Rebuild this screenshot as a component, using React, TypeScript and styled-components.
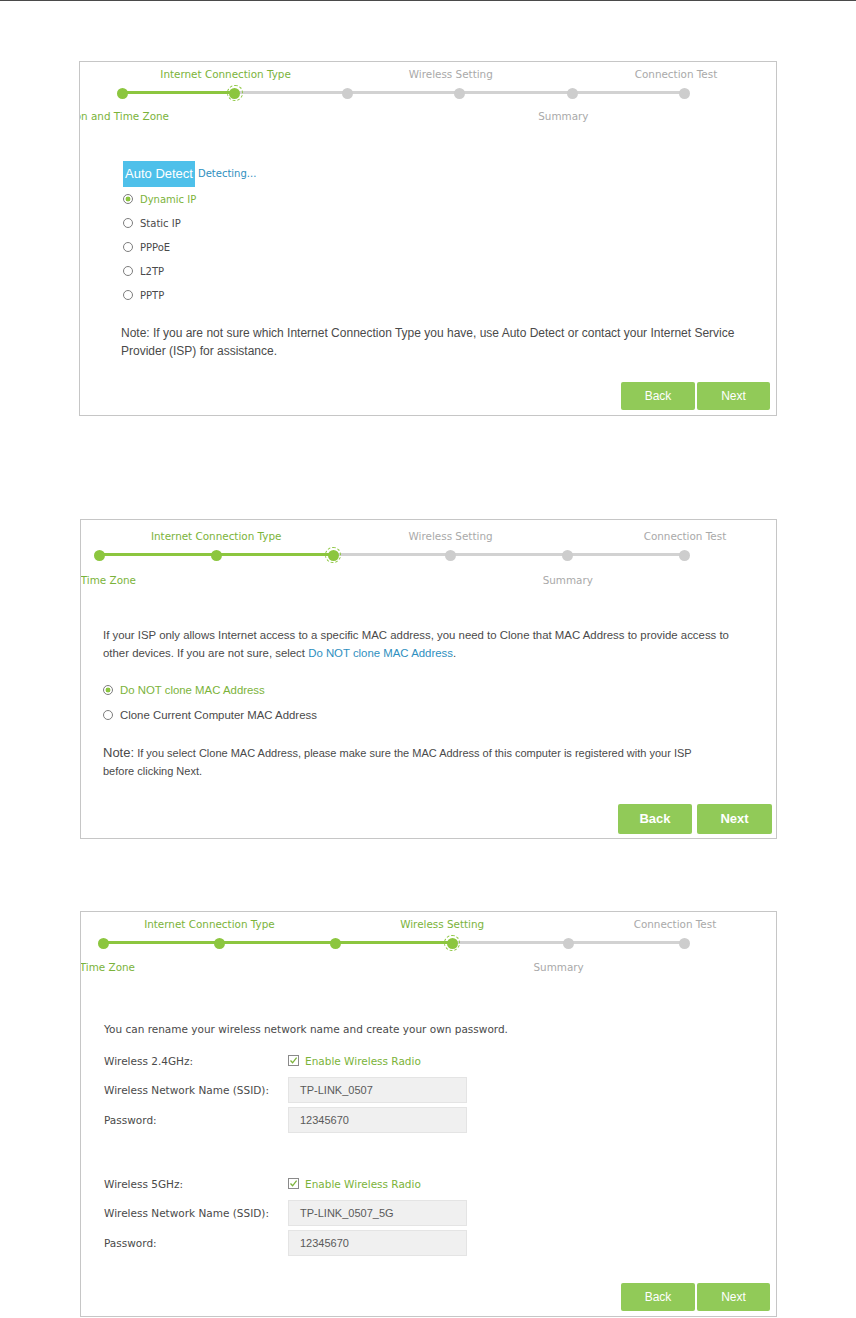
import * as React from 'react'
import styled, { createGlobalStyle } from 'styled-components'

const GREEN = '#8cc63f'
const GREEN_TEXT = '#7bb33a'
const GRAY_LINE = '#d2d2d2'
const GRAY_TEXT = '#a9a9a9'
const BODY_TEXT = '#4a4a4a'
const LINK = '#2e8fc0'

const GlobalStyle = createGlobalStyle`
    body {
        margin: 0;
        background: #fff;
    }
`

interface IStep {
    top?: string
    bottom?: string
}

const STEPS: IStep[] = [
    { bottom: 'Region and Time Zone' },
    { top: 'Internet Connection Type' },
    {},
    { top: 'Wireless Setting' },
    { bottom: 'Summary' },
    { top: 'Connection Test' },
]

interface IStepperProps {
    current: number
    padLeft: number
    padRight: number
    padTop: number
    shift: number
    firstOffset: number
    below: number
}

const Stepper = ({ current, padLeft, padRight, padTop, shift, firstOffset, below }: IStepperProps) => (
    <StepperBar padLeft={padLeft} padRight={padRight} padTop={padTop}>
        <Track pct={(current / (STEPS.length - 1)) * 100}>
            {STEPS.map((s, i) => (
                <Step key={i}>
                    <StepLabel active={i <= current} shift={shift} gapTop={0}>
                        {s.top || '\u00a0'}
                    </StepLabel>
                    <DotSlot>{i === current ? <Ring><Dot active /></Ring> : <Dot active={i < current} />}</DotSlot>
                    <StepLabel
                        active={i <= current}
                        shift={i === 0 ? firstOffset : shift}
                        anchorEnd={i === 0}
                        gapTop={below}
                    >
                        {s.bottom || '\u00a0'}
                    </StepLabel>
                </Step>
            ))}
        </Track>
    </StepperBar>
)

const Radio = ({ checked, label, wide }: { checked?: boolean; label: string; wide?: boolean }) => (
    <RadioRow wide={wide}>
        <RadioCircle checked={checked} />
        <RadioText checked={checked}>{label}</RadioText>
    </RadioRow>
)

const Footer = ({ size }: { size: 'sm' | 'lg' }) => (
    <ButtonBar size={size}>
        <GreenButton size={size} w={74}>Back</GreenButton>
        <GreenButton size={size} w={size === 'lg' ? 75 : 73}>Next</GreenButton>
    </ButtonBar>
)

const CheckIcon = () => (
    <svg width="11" height="11" viewBox="0 0 11 11">
        <rect x="0.5" y="0.5" width="10" height="10" fill="#fff" stroke="#8a8a8a" />
        <path d="M2.5 5.5 L4.6 7.8 L8.6 2.6" fill="none" stroke={GREEN_TEXT} strokeWidth="1.3" />
    </svg>
)

const WirelessGroup = ({ band, ssid, first }: { band: string; ssid: string; first?: boolean }) => (
    <FormGrid first={first}>
        <FieldLabel>Wireless {band}:</FieldLabel>
        <CheckRow>
            <CheckIcon />
            <span>Enable Wireless Radio</span>
        </CheckRow>
        <FieldLabel>Wireless Network Name (SSID):</FieldLabel>
        <TextBox>{ssid}</TextBox>
        <FieldLabel>Password:</FieldLabel>
        <TextBox>12345670</TextBox>
    </FormGrid>
)

const App = () => (
    <Page>
        <GlobalStyle />
        <Panel left={79} gapTop={60} h={355}>
            <Stepper current={1} padLeft={42} padRight={91} padTop={5} shift={-9} firstOffset={47} below={8} />
            <DetectBody>
                <DetectRow>
                    <AutoDetect>Auto Detect</AutoDetect>
                    <Detecting>Detecting...</Detecting>
                </DetectRow>
                <Radio checked label="Dynamic IP" />
                <Radio label="Static IP" />
                <Radio label="PPPoE" />
                <Radio label="L2TP" />
                <Radio label="PPTP" />
                <DetectNote>
                    Note: If you are not sure which Internet Connection Type you have, use Auto Detect or contact your
                    Internet Service Provider (ISP) for assistance.
                </DetectNote>
            </DetectBody>
            <Footer size="sm" />
        </Panel>

        <Panel left={80} gapTop={103} h={320}>
            <Stepper current={2} padLeft={18} padRight={91} padTop={9} shift={0} firstOffset={37} below={10} />
            <MacBody>
                <MacText>
                    If your ISP only allows Internet access to a specific MAC address, you need to Clone that MAC
                    Address to provide access to other devices. If you are not sure, select{' '}
                    <Link>Do NOT clone MAC Address</Link>.
                </MacText>
                <MacOptions>
                    <Radio wide checked label="Do NOT clone MAC Address" />
                    <Radio wide label="Clone Current Computer MAC Address" />
                </MacOptions>
                <MacNote>
                    <NoteTag>Note:</NoteTag> If you select Clone MAC Address, please make sure the MAC Address of this
                    computer is registered with your ISP before clicking Next.
                </MacNote>
            </MacBody>
            <Footer size="lg" />
        </Panel>

        <Panel left={80} gapTop={72} h={406}>
            <Stepper current={3} padLeft={22} padRight={91} padTop={5} shift={-10} firstOffset={32} below={9} />
            <WirelessBody>
                <Intro>You can rename your wireless network name and create your own password.</Intro>
                <WirelessGroup first band="2.4GHz" ssid="TP-LINK_0507" />
                <WirelessGroup band="5GHz" ssid="TP-LINK_0507_5G" />
            </WirelessBody>
            <Footer size="sm" />
        </Panel>
    </Page>
)

export default App

const Page = styled.div`
    width: 856px;
    min-height: 1318px;
    border-top: 1px solid #4a4a4a;
    box-sizing: border-box;
    display: flex;
    flex-direction: column;
    font-family: 'DejaVu Sans', Verdana, sans-serif;
`

interface IPanelProps {
    left: number
    gapTop: number
    h: number
}
const Panel = styled.section<IPanelProps>`
    box-sizing: border-box;
    margin-left: ${p => p.left}px;
    margin-top: ${p => p.gapTop}px;
    width: ${p => 777 - p.left}px;
    height: ${p => p.h}px;
    border: 1px solid #c6c6c6;
    overflow: hidden;
    display: flex;
    flex-direction: column;
`

/* stepper */
const StepperBar = styled.div<{ padLeft: number; padRight: number; padTop: number }>`
    padding: ${p => p.padTop}px ${p => p.padRight}px 0 ${p => p.padLeft}px;
`
const Track = styled.div<{ pct: number }>`
    display: flex;
    justify-content: space-between;
    background-image: linear-gradient(to right, ${GREEN} ${p => p.pct}%, ${GRAY_LINE} ${p => p.pct}%);
    background-repeat: no-repeat;
    background-size: 100% 3px;
    background-position: 0 24px;
`
const Step = styled.div`
    width: 0;
    display: flex;
    flex-direction: column;
    align-items: center;
`
const StepLabel = styled.div<{ active: boolean; shift: number; gapTop: number; anchorEnd?: boolean }>`
    white-space: nowrap;
    font-size: 10.4px;
    line-height: 14px;
    height: 14px;
    color: ${p => (p.active ? GREEN_TEXT : GRAY_TEXT)};
    margin-top: ${p => p.gapTop}px;
    align-self: ${p => (p.anchorEnd ? 'flex-end' : 'center')};
    transform: translateX(${p => p.shift}px);
`
const DotSlot = styled.div`
    margin-top: 4px;
    height: 16px;
    width: 16px;
    display: flex;
    align-items: center;
    justify-content: center;
`
const Dot = styled.span<{ active?: boolean }>`
    display: block;
    width: 11px;
    height: 11px;
    border-radius: 50%;
    background: ${p => (p.active ? GREEN : '#cdcdcd')};
`
const Ring = styled.span`
    display: flex;
    align-items: center;
    justify-content: center;
    width: 16px;
    height: 16px;
    box-sizing: border-box;
    border-radius: 50%;
    border: 1px dashed ${GREEN};
`

/* radios */
const RadioRow = styled.div<{ wide?: boolean }>`
    display: flex;
    align-items: center;
    height: ${p => (p.wide ? 25 : 24)}px;
    gap: 7px;
`
const RadioCircle = styled.span<{ checked?: boolean }>`
    box-sizing: border-box;
    width: 10px;
    height: 10px;
    border-radius: 50%;
    border: 1px solid #7d7d7d;
    background: ${p => (p.checked ? `radial-gradient(circle, ${GREEN} 0 2.2px, #fff 2.7px)` : '#fff')};
`
const RadioText = styled.span<{ checked?: boolean }>`
    font-size: 10px;
    color: ${p => (p.checked ? GREEN_TEXT : BODY_TEXT)};
`

/* panel 1 */
const DetectBody = styled.div`
    padding: 38px 0 0 43px;
`
const DetectRow = styled.div`
    display: flex;
    align-items: center;
    height: 26px;
`
const AutoDetect = styled.div`
    width: 72px;
    height: 26px;
    line-height: 26px;
    text-align: center;
    background: #4ec0ea;
    color: #fff;
    font-family: 'Liberation Sans', Arial, sans-serif;
    font-size: 13px;
    white-space: nowrap;
`
const Detecting = styled.span`
    margin-left: 3px;
    margin-top: -2px;
    font-size: 10px;
    color: ${LINK};
`
const DetectNote = styled.p`
    margin: 17px 0 0 -2px;
    width: 625px;
    font-family: 'Liberation Sans', Arial, sans-serif;
    font-size: 12px;
    line-height: 18px;
    color: ${BODY_TEXT};
`

/* panel 2 */
const MacBody = styled.div`
    padding: 39px 0 0 22px;
    font-family: 'Liberation Sans', Arial, sans-serif;
    font-size: 11.4px;
    color: ${BODY_TEXT};
    ${RadioText} {
        font-family: 'Liberation Sans', Arial, sans-serif;
        font-size: 11.4px;
    }
`
const MacText = styled.p`
    margin: 0;
    width: 636px;
    line-height: 18px;
`
const Link = styled.span`
    color: ${LINK};
`
const MacOptions = styled.div`
    margin-top: 15px;
`
const MacNote = styled.p`
    margin: 17px 0 0;
    width: 600px;
    font-size: 11px;
    line-height: 18px;
`
const NoteTag = styled.span`
    font-size: 13px;
`

/* panel 3 */
const WirelessBody = styled.div`
    padding: 46px 0 0 23px;
    font-size: 10.5px;
    color: ${BODY_TEXT};
`
const Intro = styled.p`
    margin: 0;
    line-height: 18px;
`
const FormGrid = styled.div<{ first?: boolean }>`
    display: grid;
    grid-template-columns: 184px 179px;
    grid-template-rows: 25px 26px 26px;
    row-gap: 4px;
    align-items: center;
    margin-top: ${p => (p.first ? 10 : 38)}px;
`
const FieldLabel = styled.div`
    color: ${BODY_TEXT};
`
const CheckRow = styled.div`
    display: flex;
    align-items: center;
    gap: 6px;
    color: ${GREEN_TEXT};
`
const TextBox = styled.div`
    box-sizing: border-box;
    height: 26px;
    line-height: 24px;
    padding-left: 11px;
    background: #f0f0f0;
    border: 1px solid #e4e4e4;
    font-family: 'Liberation Sans', Arial, sans-serif;
    font-size: 11px;
    color: #5a5a5a;
`

/* footer */
const ButtonBar = styled.div<{ size: 'sm' | 'lg' }>`
    margin-top: auto;
    display: flex;
    justify-content: flex-end;
    gap: ${p => (p.size === 'lg' ? 5 : 2)}px;
    padding: 0 ${p => (p.size === 'lg' ? 4 : 6)}px ${p => (p.size === 'lg' ? 4 : 5)}px 0;
`
const GreenButton = styled.div<{ size: 'sm' | 'lg'; w: number }>`
    width: ${p => p.w}px;
    height: ${p => (p.size === 'lg' ? 30 : 28)}px;
    line-height: ${p => (p.size === 'lg' ? 30 : 28)}px;
    text-align: center;
    background: #91ca58;
    border-radius: 2px;
    color: #fff;
    font-family: 'Liberation Sans', Arial, sans-serif;
    font-size: ${p => (p.size === 'lg' ? 13 : 12)}px;
    font-weight: ${p => (p.size === 'lg' ? 'bold' : 'normal')};
`
